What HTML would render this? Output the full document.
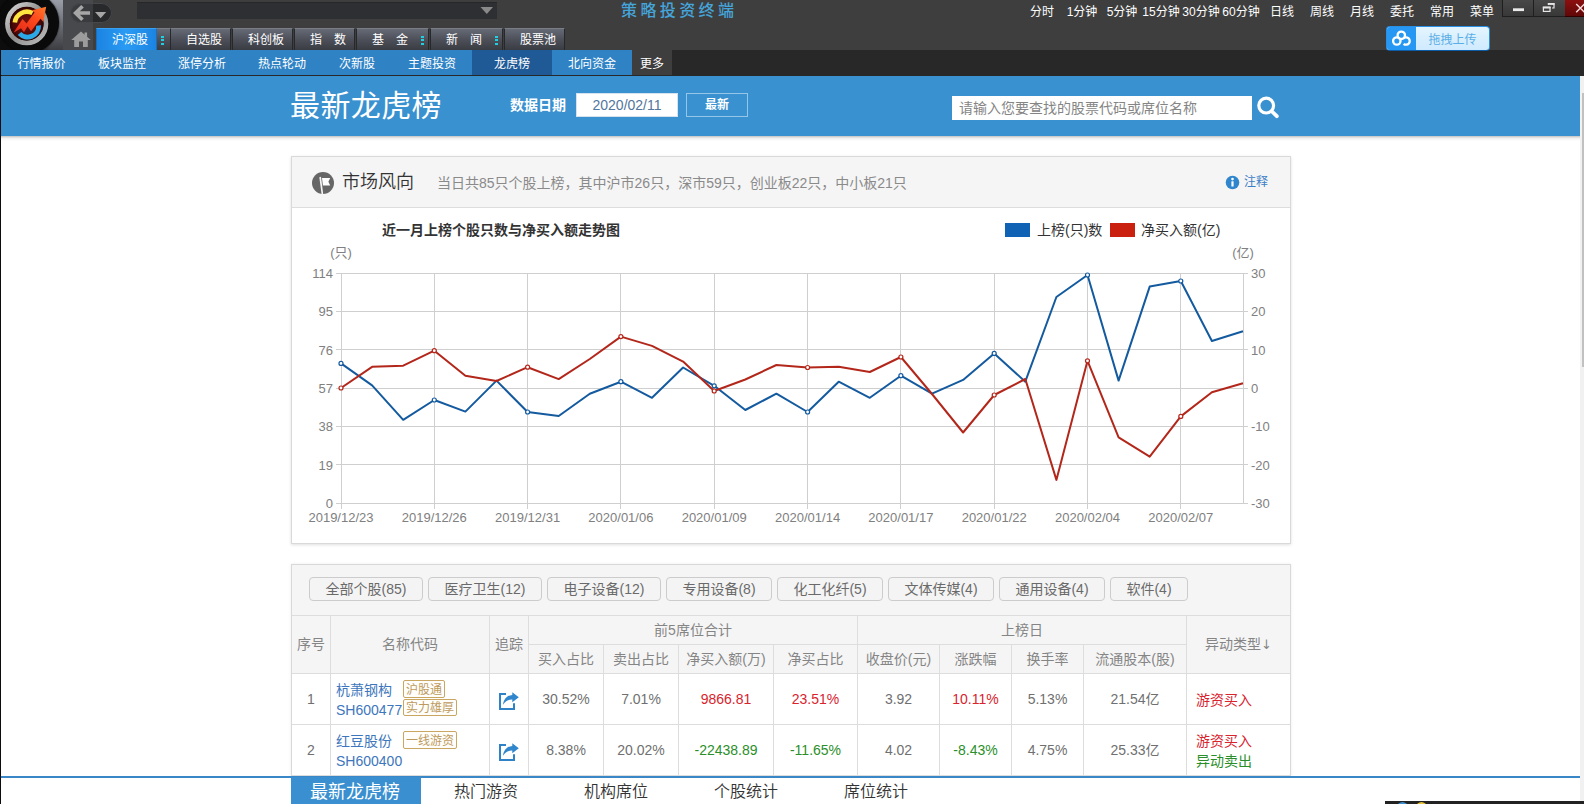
<!DOCTYPE html>
<html lang="zh-CN">
<head>
<meta charset="utf-8">
<title>最新龙虎榜</title>
<style>
*{box-sizing:border-box;margin:0;padding:0}
html,body{width:1584px;height:804px;overflow:hidden;background:#fff}
body{position:relative;font-family:"Liberation Sans","Noto Sans CJK SC",sans-serif;font-size:14px;color:#666}
.abs{position:absolute}
/* ---------- app chrome ---------- */
#chrome{position:absolute;left:0;top:0;width:1584px;height:50px;background:#3e3e3e}
#chrome2{position:absolute;left:0;top:50px;width:1584px;height:26px;background:#282828}
.tm{position:absolute;top:4px;height:16px;width:40px;text-align:center;color:#fff;font-size:12px;line-height:16px;white-space:nowrap}
.tab{position:absolute;top:28px;height:22px;color:#fff;font-size:12px;line-height:23px;text-align:left;padding-left:15px;background:linear-gradient(#666a75,#4d5059 50%,#3a3c43);border:1px solid #27282c;border-top-color:#7a7d86;border-bottom:none;white-space:pre}
.tab.on{background:linear-gradient(90deg,#1b84e2,#2a9bf4 50%,#1b84e2);border-color:#1a6fbd;border-top-color:#3aa0f0}
.dots{position:absolute;top:36px;width:3px;height:9px;background:repeating-linear-gradient(#1fd0e2 0 2px,transparent 2px 3.300px)}
.sn{position:absolute;top:50px;height:25px;line-height:28px;color:#fff;font-size:12px;text-align:center;background:#2f83c5;white-space:nowrap}
.sn.on{background:#1f5a96}
/* ---------- page ---------- */
#hdr{position:absolute;left:1px;top:76px;width:1579px;height:60px;background:#3a91d0}
.panel{position:absolute;left:291px;width:1000px;border:1px solid #d9d9d9;background:#fff;box-shadow:0 1px 3px rgba(0,0,0,.13)}
.fbtn{position:absolute;top:12px;height:24px;line-height:23px;border:1px solid #ccc;border-radius:4px;background:#f4f4f4;color:#6a6a6a;font-size:14px;text-align:center;white-space:nowrap}
.th{position:absolute;background:#f5f5f5;color:#858585;font-size:14px;text-align:center;border-right:1px solid #ddd;border-bottom:1px solid #ddd;white-space:nowrap}
.td{position:absolute;color:#707070;font-size:14px;text-align:center;border-right:1px solid #ddd;border-bottom:1px solid #ddd;white-space:nowrap}
.red{color:#d9232e}.grn{color:#2a8f2a}.blu{color:#3d76bc}
.tag{position:absolute;height:16px;line-height:14px;border:1px solid #c9a662;border-radius:2px;color:#bd9a5e;font-size:12px;padding:1px 2px 0;background:#fffefa;white-space:nowrap}
.bt{position:absolute;top:777px;height:27px;width:130px;text-align:center;font-size:16px;line-height:30px;color:#333;white-space:nowrap;font-weight:350}
</style>
</head>
<body>
<!-- ======= APP CHROME ======= -->
<div id="chrome"></div>
<div id="chrome2"></div>
<!-- logo -->
<div class="abs" style="left:63px;top:0;width:30px;height:50px;background:#47494d"></div>
<div class="abs" style="left:0;top:0;width:63px;height:50px;background:linear-gradient(90deg,#0d0d0d 0,#0d0d0d 50%,rgba(13,13,13,0) 80%),linear-gradient(#9a9ea8,#74777f 40%,#3c3d41);overflow:hidden">
  <div class="abs" style="left:-2px;top:-8px;width:61px;height:61px;border-radius:50%;background:#0a0a0a;box-shadow:0 0 2px #000"></div>
</div>
<svg class="abs" style="left:0;top:0" width="63" height="50" viewBox="0 0 63 50">
  <defs>
    <linearGradient id="lgRing" x1="0" y1="0" x2="1" y2="1"><stop offset="0" stop-color="#d9d9d9"/><stop offset=".5" stop-color="#8c8c8c"/><stop offset="1" stop-color="#bdbdbd"/></linearGradient>
    <radialGradient id="lgIn" cx=".5" cy=".5" r=".5"><stop offset="0" stop-color="#7a1410"/><stop offset=".8" stop-color="#4a0806"/><stop offset="1" stop-color="#2a0403"/></radialGradient>
    <linearGradient id="lgArrow" x1="0" y1="1" x2="1" y2="0"><stop offset="0" stop-color="#e0281a"/><stop offset=".6" stop-color="#ff4a1c"/><stop offset="1" stop-color="#ff7a2a"/></linearGradient>
  </defs>
  <circle cx="26.700" cy="23.700" r="19.200" fill="none" stroke="url(#lgRing)" stroke-width="4.800"/>
  <circle cx="26.700" cy="23.700" r="16.900" fill="url(#lgIn)"/>
  <path d="M14.800 22.500 A12.300 12.300 0 0 1 32.500 13" fill="none" stroke="#ffe53f" stroke-width="4.600"/>
  <path d="M19.500 33.500 A11 11 0 0 0 38.600 25.500" fill="none" stroke="#2aa9e6" stroke-width="4.800"/>
  <path d="M13.500 32.800 L22.500 19 L26.500 23.500 L34.500 12.500 L32 10.300 L46.200 6.800 L43.200 21.800 L40.500 18.800 L31 31.200 L27.500 26.200 L24 32.200 L21 28.300 Z" fill="url(#lgArrow)"/>
</svg>
<!-- back / dropdown pill -->
<div class="abs" style="left:70px;top:3px;width:42px;height:20px;border-radius:10px;background:linear-gradient(90deg,#393b3f 0 54.500%,#28292b 54.500%);box-shadow:0 0 0 1px #46484c inset"></div>
<svg class="abs" style="left:70px;top:3px" width="42" height="20" viewBox="0 0 42 20">
  <path d="M3 10 L11.200 2 L13.800 4.400 L9.800 8.200 L20 8.200 L20 11.800 L9.800 11.800 L13.800 15.600 L11.200 18 Z" fill="#a6a6a6"/>
  <path d="M25 9 L36.200 9 L30.600 15.200 Z" fill="#a6a6a6"/>
</svg>
<!-- address bar -->
<div class="abs" style="left:137px;top:2px;width:360px;height:17px;background:#2d2f32;border-top:1px solid #262729"></div>
<svg class="abs" style="left:480px;top:6px" width="14" height="9" viewBox="0 0 14 9"><path d="M0.5 1 L13 1 L6.8 8 Z" fill="#8a8a8a"/></svg>
<!-- title -->
<div class="abs" style="left:621px;top:1px;width:130px;height:20px;line-height:20px;font-size:16px;letter-spacing:3.400px;color:#45a4da;white-space:nowrap;font-weight:500">策略投资终端</div>
<!-- top menu -->
<div class="tm" style="left:1022px">分时</div>
<div class="tm" style="left:1062px">1分钟</div>
<div class="tm" style="left:1102px">5分钟</div>
<div class="tm" style="left:1141px">15分钟</div>
<div class="tm" style="left:1181px">30分钟</div>
<div class="tm" style="left:1221px">60分钟</div>
<div class="tm" style="left:1262px">日线</div>
<div class="tm" style="left:1302px">周线</div>
<div class="tm" style="left:1342px">月线</div>
<div class="tm" style="left:1382px">委托</div>
<div class="tm" style="left:1422px">常用</div>
<div class="tm" style="left:1462px">菜单</div>
<!-- window buttons -->
<div class="abs" style="left:1502px;top:0;width:32px;height:17px;background:linear-gradient(#484848,#383838);border:1px solid #1f1f1f;border-top:none"></div>
<div class="abs" style="left:1533px;top:0;width:33px;height:17px;background:linear-gradient(#484848,#383838);border:1px solid #1f1f1f;border-top:none"></div>
<div class="abs" style="left:1565px;top:0;width:19px;height:17px;background:linear-gradient(#8d0f0f,#600808);border-bottom:1px solid #300"></div>
<svg class="abs" style="left:1502px;top:0" width="82" height="17" viewBox="0 0 82 17">
  <rect x="11" y="8.300" width="11" height="2.800" fill="#eaeaea"/>
  <path d="M46.500 4.800 V3.800 H52 V8 H50" fill="none" stroke="#e6e6e6" stroke-width="1.200"/><rect x="45.800" y="3" width="6.800" height="1.800" fill="#e6e6e6"/>
  <rect x="41.400" y="7.600" width="6.600" height="3.800" fill="none" stroke="#e6e6e6" stroke-width="1.200"/><rect x="40.800" y="6.400" width="7.800" height="2" fill="#e6e6e6"/>
  <path d="M74.200 4 L82.500 12.300 M82.500 4 L74.200 12.300" stroke="#f3d6d6" stroke-width="1.500"/>
</svg>
<!-- upload button -->
<div class="abs" style="left:1386px;top:26px;width:104px;height:25px;border-radius:4px;background:linear-gradient(#e4f5ff,#cfeaff);border:1px solid #2a90e6;border-bottom-color:#0d5ca8;overflow:hidden">
  <div class="abs" style="left:-1px;top:-1px;width:30px;height:25px;background:#2698f3"></div>
  <div class="abs" style="left:29px;top:0;width:73px;height:23px;line-height:26px;text-align:center;font-size:12px;color:#5aaee6">拖拽上传</div>
</div>
<svg class="abs" style="left:1390px;top:29px" width="24" height="19" viewBox="0 0 24 19">
  <g fill="none" stroke="#fff" stroke-width="2.300"><circle cx="11.300" cy="6.300" r="3.700"/><circle cx="6.800" cy="12" r="3.700"/><path d="M13.200 9.600 A3.700 3.700 0 1 1 13.600 14.800"/></g>
</svg>
<!-- home -->
<svg class="abs" style="left:70px;top:30px" width="22" height="18" viewBox="0 0 22 18">
  <path d="M11 1.5 L1.2 10 L4.2 10 L4.2 17 L9 17 L9 11.500 L13 11.500 L13 17 L17.8 17 L17.800 10 L20.800 10 Z" fill="#9c9c9c"/>
  <rect x="14.500" y="2.500" width="2.600" height="4.500" fill="#9c9c9c"/>
</svg>
<!-- tabs -->
<div class="tab" style="left:156px;width:13px"></div>
<div class="tab on" style="left:96px;width:61px">沪深股</div>
<div class="tab" style="left:170px;width:61px">自选股</div>
<div class="tab" style="left:232px;width:61px">科创板</div>
<div class="tab" style="left:294px;width:61px">指　数</div>
<div class="tab" style="left:356px;width:73px">基　金</div>
<div class="tab" style="left:430px;width:73px">新　闻</div>
<div class="tab" style="left:504px;width:61px">股票池</div>
<div class="dots" style="left:161px"></div>
<div class="dots" style="left:421px"></div>
<div class="dots" style="left:495px"></div>
<!-- sub nav -->
<div class="abs" style="left:0;top:50px;width:2px;height:26px;background:#1b1b1b"></div>
<div class="sn" style="left:1px;width:81px">行情报价</div>
<div class="sn" style="left:82px;width:80px">板块监控</div>
<div class="sn" style="left:162px;width:80px">涨停分析</div>
<div class="sn" style="left:242px;width:80px">热点轮动</div>
<div class="sn" style="left:322px;width:70px">次新股</div>
<div class="sn" style="left:392px;width:80px">主题投资</div>
<div class="sn on" style="left:472px;width:80px">龙虎榜</div>
<div class="sn" style="left:552px;width:80px">北向资金</div>
<div class="sn" style="left:632px;width:40px;background:#3e3e3e">更多</div>

<!-- ======= PAGE HEADER ======= -->
<div id="hdr"></div>
<div class="abs" style="left:0;top:50px;width:1px;height:754px;background:#0c0c0c"></div>
<div class="abs" style="left:1px;top:136px;width:1579px;height:5px;background:linear-gradient(rgba(0,0,0,.24),rgba(0,0,0,.06) 45%,rgba(0,0,0,0))"></div>
<div class="abs" style="left:290px;top:84px;height:44px;line-height:44px;font-size:30px;color:#fff;white-space:nowrap;font-weight:400;letter-spacing:0.400px">最新龙虎榜</div>
<div class="abs" style="left:510px;top:94px;height:22px;line-height:22px;font-size:14px;color:#fff;font-weight:700;white-space:nowrap">数据日期</div>
<div class="abs" style="left:576px;top:93px;width:102px;height:24px;background:#fff;border:1px solid #d5e3ef;color:#52769c;font-size:14px;line-height:22px;text-align:center">2020/02/11</div>
<div class="abs" style="left:686px;top:93px;width:62px;height:24px;border:1px solid #95c6ea;color:#fff;font-size:12px;line-height:22px;text-align:center;font-weight:700">最新</div>
<div class="abs" style="left:952px;top:96px;width:300px;height:24px;background:#fff;color:#858585;font-size:14px;line-height:24px;padding-left:7px;white-space:nowrap">请输入您要查找的股票代码或席位名称</div>
<svg class="abs" style="left:1255px;top:94px" width="28" height="28" viewBox="0 0 28 28"><circle cx="11.200" cy="11.600" r="7.400" fill="none" stroke="#fff" stroke-width="3.200"/><path d="M17 17.500 L21.800 22.200" stroke="#fff" stroke-width="3.800" stroke-linecap="round"/></svg>
<!-- right scrollbar -->
<div class="abs" style="left:1580px;top:76px;width:4px;height:725px;background:#f1f1f1;z-index:5"></div>
<div class="abs" style="left:1581.500px;top:93px;width:2.500px;height:274px;background:#c1c1c1;z-index:5"></div>

<!-- P1START -->
<!-- ======= PANEL 1 : 市场风向 ======= -->
<div class="panel" id="p1" style="top:156px;height:388px">
<div class="abs" style="left:0;top:0;width:998px;height:51px;background:#f5f5f5;border-bottom:1px solid #ddd"></div>
<svg class="abs" style="left:0;top:0" width="998" height="386" viewBox="0 0 998 386" font-family="Liberation Sans, Noto Sans CJK SC, sans-serif">
<path d="M44.0 116.5 H956.0 M44.0 154.5 H956.0 M44.0 192.5 H956.0 M44.0 231.5 H956.0 M44.0 269.5 H956.0 M44.0 307.5 H956.0 M44.0 346.5 H956.0 M49.5 116.0 V352.0 M142.5 116.0 V352.0 M235.5 116.0 V352.0 M328.5 116.0 V352.0 M422.5 116.0 V352.0 M515.5 116.0 V352.0 M608.5 116.0 V352.0 M702.5 116.0 V352.0 M795.5 116.0 V352.0 M888.5 116.0 V352.0 M951.5 116.0 V346.0" fill="none" stroke="#cfcfcf" stroke-width="1"/>
<g font-size="13" fill="#808080">
<text x="49" y="100" text-anchor="middle">(只)</text>
<text x="951" y="100" text-anchor="middle">(亿)</text>
<text x="41" y="121.0" text-anchor="end">114</text>
<text x="41" y="159.3" text-anchor="end">95</text>
<text x="41" y="197.7" text-anchor="end">76</text>
<text x="41" y="236.0" text-anchor="end">57</text>
<text x="41" y="274.3" text-anchor="end">38</text>
<text x="41" y="312.7" text-anchor="end">19</text>
<text x="41" y="351.0" text-anchor="end">0</text>
<text x="959" y="121.0">30</text>
<text x="959" y="159.3">20</text>
<text x="959" y="197.7">10</text>
<text x="959" y="236.0">0</text>
<text x="959" y="274.3">-10</text>
<text x="959" y="312.7">-20</text>
<text x="959" y="351.0">-30</text>
<text x="49.0" y="365" text-anchor="middle">2019/12/23</text>
<text x="142.3" y="365" text-anchor="middle">2019/12/26</text>
<text x="235.6" y="365" text-anchor="middle">2019/12/31</text>
<text x="328.9" y="365" text-anchor="middle">2020/01/06</text>
<text x="422.2" y="365" text-anchor="middle">2020/01/09</text>
<text x="515.6" y="365" text-anchor="middle">2020/01/14</text>
<text x="608.9" y="365" text-anchor="middle">2020/01/17</text>
<text x="702.2" y="365" text-anchor="middle">2020/01/22</text>
<text x="795.5" y="365" text-anchor="middle">2020/02/04</text>
<text x="888.8" y="365" text-anchor="middle">2020/02/07</text>
</g>
<text x="90" y="78" font-size="14" font-weight="bold" fill="#333">近一月上榜个股只数与净买入额走势图</text>
<rect x="713" y="66" width="25" height="14" fill="#0f62b4"/>
<text x="745" y="78" font-size="14" fill="#333">上榜(只)数</text>
<rect x="818" y="66" width="25" height="14" fill="#c9200f"/>
<text x="849" y="78" font-size="14" fill="#333">净买入额(亿)</text>
<polyline points="49.0,206.4 80.1,228.4 111.2,262.8 142.3,243.0 173.4,254.6 204.5,223.6 235.6,255.0 266.7,259.0 297.8,236.7 328.9,224.7 360.0,240.8 391.1,210.5 422.2,228.8 453.3,253.0 484.4,236.7 515.6,255.0 546.7,224.7 577.8,240.8 608.9,218.7 640.0,236.7 671.1,222.9 702.2,196.4 733.3,224.7 764.4,140.0 795.5,118.0 826.6,223.6 857.7,129.6 888.8,124.0 919.9,184.0 951.0,174.3" fill="none" stroke="#145a9f" stroke-width="2" stroke-linejoin="round"/>
<polyline points="49.0,231.0 80.1,209.8 111.2,208.7 142.3,193.7 173.4,218.7 204.5,224.0 235.6,210.2 266.7,222.1 297.8,202.0 328.9,179.6 360.0,188.9 391.1,204.6 422.2,234.0 453.3,222.5 484.4,208.0 515.6,210.5 546.7,209.8 577.8,215.0 608.9,200.0 640.0,237.0 671.1,275.5 702.2,238.0 733.3,222.0 764.4,322.9 795.5,203.8 826.6,280.3 857.7,299.7 888.8,259.4 919.9,235.2 951.0,226.2" fill="none" stroke="#b3271b" stroke-width="2" stroke-linejoin="round"/>
<circle cx="49.0" cy="206.4" r="2" fill="#fff" stroke="#145a9f" stroke-width="1.2"/>
<circle cx="142.3" cy="243.0" r="2" fill="#fff" stroke="#145a9f" stroke-width="1.2"/>
<circle cx="235.6" cy="255.0" r="2" fill="#fff" stroke="#145a9f" stroke-width="1.2"/>
<circle cx="328.9" cy="224.7" r="2" fill="#fff" stroke="#145a9f" stroke-width="1.2"/>
<circle cx="422.2" cy="228.8" r="2" fill="#fff" stroke="#145a9f" stroke-width="1.2"/>
<circle cx="515.6" cy="255.0" r="2" fill="#fff" stroke="#145a9f" stroke-width="1.2"/>
<circle cx="608.9" cy="218.7" r="2" fill="#fff" stroke="#145a9f" stroke-width="1.2"/>
<circle cx="702.2" cy="196.4" r="2" fill="#fff" stroke="#145a9f" stroke-width="1.2"/>
<circle cx="795.5" cy="118.0" r="2" fill="#fff" stroke="#145a9f" stroke-width="1.2"/>
<circle cx="888.8" cy="124.0" r="2" fill="#fff" stroke="#145a9f" stroke-width="1.2"/>
<circle cx="49.0" cy="231.0" r="2" fill="#fff" stroke="#b3271b" stroke-width="1.2"/>
<circle cx="142.3" cy="193.7" r="2" fill="#fff" stroke="#b3271b" stroke-width="1.2"/>
<circle cx="235.6" cy="210.2" r="2" fill="#fff" stroke="#b3271b" stroke-width="1.2"/>
<circle cx="328.9" cy="179.6" r="2" fill="#fff" stroke="#b3271b" stroke-width="1.2"/>
<circle cx="422.2" cy="234.0" r="2" fill="#fff" stroke="#b3271b" stroke-width="1.2"/>
<circle cx="515.6" cy="210.5" r="2" fill="#fff" stroke="#b3271b" stroke-width="1.2"/>
<circle cx="608.9" cy="200.0" r="2" fill="#fff" stroke="#b3271b" stroke-width="1.2"/>
<circle cx="702.2" cy="238.0" r="2" fill="#fff" stroke="#b3271b" stroke-width="1.2"/>
<circle cx="795.5" cy="203.8" r="2" fill="#fff" stroke="#b3271b" stroke-width="1.2"/>
<circle cx="888.8" cy="259.4" r="2" fill="#fff" stroke="#b3271b" stroke-width="1.2"/>
</svg>
<svg class="abs" style="left:19px;top:14px" width="24" height="24" viewBox="0 0 24 24"><circle cx="12" cy="12" r="11" fill="#666"/><path d="M8.300 6.200 L10 5.800 L12.200 23.200 L10.600 23.200 Z" fill="#f5f5f5"/><path d="M11 7 L19.200 7 L17.400 10.800 L19.200 14.600 L11.900 14.600 Z" fill="#fff"/></svg>
<div class="abs" style="left:50px;top:12px;height:26px;line-height:26px;font-size:18px;color:#333;white-space:nowrap;font-weight:350">市场风向</div>
<div class="abs" style="left:145px;top:15px;height:22px;line-height:22px;font-size:14px;color:#8a8a8a;white-space:nowrap">当日共85只个股上榜，其中沪市26只，深市59只，创业板22只，中小板21只</div>
<svg class="abs" style="left:932.500px;top:17.500px" width="15" height="15" viewBox="0 0 15 15"><circle cx="7.500" cy="7.500" r="6.800" fill="#2f86cc"/><rect x="6.400" y="6.300" width="2.200" height="5.200" fill="#fff"/><circle cx="7.500" cy="4.100" r="1.300" fill="#fff"/></svg>
<div class="abs" style="left:952px;top:15px;height:20px;line-height:20px;font-size:12px;color:#3b80c6;white-space:nowrap">注释</div>
</div>
<!-- P1END -->
<!-- P2START -->
<!-- ======= PANEL 2 : table ======= -->
<div class="panel" id="p2" style="top:564px;height:260px;box-shadow:0 0 3px rgba(0,0,0,.08)">
<div class="abs" style="left:0;top:0;width:998px;height:51px;background:#f5f5f5;border-bottom:1px solid #ddd"></div>
<div class="fbtn" style="left:17px;width:114px">全部个股(85)</div>
<div class="fbtn" style="left:136px;width:114px">医疗卫生(12)</div>
<div class="fbtn" style="left:255px;width:114px">电子设备(12)</div>
<div class="fbtn" style="left:374px;width:106px">专用设备(8)</div>
<div class="fbtn" style="left:485px;width:106px">化工化纤(5)</div>
<div class="fbtn" style="left:596px;width:106px">文体传媒(4)</div>
<div class="fbtn" style="left:707px;width:106px">通用设备(4)</div>
<div class="fbtn" style="left:818px;width:78px">软件(4)</div>
<div class="th" style="left:0px;top:51px;width:39px;height:58px;line-height:57px;">序号</div>
<div class="th" style="left:39px;top:51px;width:159px;height:58px;line-height:57px;">名称代码</div>
<div class="th" style="left:198px;top:51px;width:39px;height:58px;line-height:57px;">追踪</div>
<div class="th" style="left:237px;top:51px;width:329px;height:29px;line-height:28px;">前5席位合计</div>
<div class="th" style="left:566px;top:51px;width:329px;height:29px;line-height:28px;">上榜日</div>
<div class="th" style="left:895px;top:51px;width:103px;height:58px;line-height:57px;border-right:none;">异动类型<span style="font-family:'DejaVu Sans',sans-serif;font-size:13px">↓</span></div>
<div class="th" style="left:237px;top:80px;width:75px;height:29px;line-height:28px;">买入占比</div>
<div class="th" style="left:312px;top:80px;width:75px;height:29px;line-height:28px;">卖出占比</div>
<div class="th" style="left:387px;top:80px;width:95px;height:29px;line-height:28px;">净买入额(万)</div>
<div class="th" style="left:482px;top:80px;width:84px;height:29px;line-height:28px;">净买占比</div>
<div class="th" style="left:566px;top:80px;width:82px;height:29px;line-height:28px;">收盘价(元)</div>
<div class="th" style="left:648px;top:80px;width:72px;height:29px;line-height:28px;">涨跌幅</div>
<div class="th" style="left:720px;top:80px;width:72px;height:29px;line-height:28px;">换手率</div>
<div class="th" style="left:792px;top:80px;width:103px;height:29px;line-height:28px;">流通股本(股)</div>
<div class="td " style="left:0px;top:109px;width:39px;height:51px;line-height:50px;">1</div>
<div class="td " style="left:39px;top:109px;width:159px;height:51px;line-height:50px;text-align:left;"><div class="abs blu" style="left:5px;top:6px;height:20px;line-height:20px">杭萧钢构</div><div class="abs blu" style="left:5px;top:26px;height:20px;line-height:20px">SH600477</div><div class="tag" style="left:72px;top:6px;height:18px;line-height:16px">沪股通</div><div class="tag" style="left:72px;top:25px;height:17px;line-height:15px">实力雄厚</div></div>
<div class="td " style="left:198px;top:109px;width:39px;height:51px;line-height:50px;"><svg class="abs" style="left:8px;top:17px" width="23" height="21" viewBox="0 0 23 21"><path d="M8 3 H2 V18 H16 V12.200" fill="none" stroke="#2f82c6" stroke-width="2"/><path d="M14.300 1.200 L20.800 6.200 L14.300 11.300 L14.300 8.600 C10.500 8.400 7.500 10 5 13.800 C5.600 8 9.500 4.200 14.300 3.900 Z" fill="#2f86cc"/></svg></div>
<div class="td " style="left:237px;top:109px;width:75px;height:51px;line-height:50px;">30.52%</div>
<div class="td " style="left:312px;top:109px;width:75px;height:51px;line-height:50px;">7.01%</div>
<div class="td red" style="left:387px;top:109px;width:95px;height:51px;line-height:50px;">9866.81</div>
<div class="td red" style="left:482px;top:109px;width:84px;height:51px;line-height:50px;">23.51%</div>
<div class="td " style="left:566px;top:109px;width:82px;height:51px;line-height:50px;">3.92</div>
<div class="td red" style="left:648px;top:109px;width:72px;height:51px;line-height:50px;">10.11%</div>
<div class="td " style="left:720px;top:109px;width:72px;height:51px;line-height:50px;">5.13%</div>
<div class="td " style="left:792px;top:109px;width:103px;height:51px;line-height:50px;">21.54亿</div>
<div class="td " style="left:895px;top:109px;width:103px;height:51px;line-height:50px;border-right:none;text-align:left;"><div class="abs red" style="left:9px;top:16px;height:20px;line-height:20px;font-size:14px">游资买入</div></div>
<div class="td " style="left:0px;top:160px;width:39px;height:51px;line-height:50px;">2</div>
<div class="td " style="left:39px;top:160px;width:159px;height:51px;line-height:50px;text-align:left;"><div class="abs blu" style="left:5px;top:6px;height:20px;line-height:20px">红豆股份</div><div class="abs blu" style="left:5px;top:26px;height:20px;line-height:20px">SH600400</div><div class="tag" style="left:72px;top:6px;height:18px;line-height:16px">一线游资</div></div>
<div class="td " style="left:198px;top:160px;width:39px;height:51px;line-height:50px;"><svg class="abs" style="left:8px;top:17px" width="23" height="21" viewBox="0 0 23 21"><path d="M8 3 H2 V18 H16 V12.200" fill="none" stroke="#2f82c6" stroke-width="2"/><path d="M14.300 1.200 L20.800 6.200 L14.300 11.300 L14.300 8.600 C10.500 8.400 7.500 10 5 13.800 C5.600 8 9.500 4.200 14.300 3.900 Z" fill="#2f86cc"/></svg></div>
<div class="td " style="left:237px;top:160px;width:75px;height:51px;line-height:50px;">8.38%</div>
<div class="td " style="left:312px;top:160px;width:75px;height:51px;line-height:50px;">20.02%</div>
<div class="td grn" style="left:387px;top:160px;width:95px;height:51px;line-height:50px;">-22438.89</div>
<div class="td grn" style="left:482px;top:160px;width:84px;height:51px;line-height:50px;">-11.65%</div>
<div class="td " style="left:566px;top:160px;width:82px;height:51px;line-height:50px;">4.02</div>
<div class="td grn" style="left:648px;top:160px;width:72px;height:51px;line-height:50px;">-8.43%</div>
<div class="td " style="left:720px;top:160px;width:72px;height:51px;line-height:50px;">4.75%</div>
<div class="td " style="left:792px;top:160px;width:103px;height:51px;line-height:50px;">25.33亿</div>
<div class="td " style="left:895px;top:160px;width:103px;height:51px;line-height:50px;border-right:none;text-align:left;"><div class="abs red" style="left:9px;top:6px;height:20px;line-height:20px;font-size:14px">游资买入</div><div class="abs grn" style="left:9px;top:26px;height:20px;line-height:20px;font-size:14px">异动卖出</div></div>
</div>
<!-- ======= BOTTOM NAV ======= -->
<div class="abs" style="left:1px;top:776px;width:1579px;height:28px;background:#fff"></div>
<div class="abs" style="left:1px;top:776px;width:1579px;height:2px;background:#3a87c8"></div>
<div class="bt" style="left:291px;top:777px;height:27px;background:#3a8fd0;color:#fff;font-size:18px;line-height:30px;font-weight:400;text-indent:-2px">最新龙虎榜</div>
<div class="bt" style="left:421px">热门游资</div>
<div class="bt" style="left:551px">机构席位</div>
<div class="bt" style="left:681px">个股统计</div>
<div class="bt" style="left:811px">席位统计</div>
<div class="abs" style="left:1385px;top:801px;width:199px;height:3px;background:#222;z-index:6;overflow:hidden"><div class="abs" style="left:12px;top:1px;width:11px;height:11px;border-radius:50%;background:#3f8fd0"></div><div class="abs" style="left:31px;top:1px;width:11px;height:11px;border-radius:50%;background:#e8c23a"></div></div>
<!-- P2END -->
</body>
</html>
